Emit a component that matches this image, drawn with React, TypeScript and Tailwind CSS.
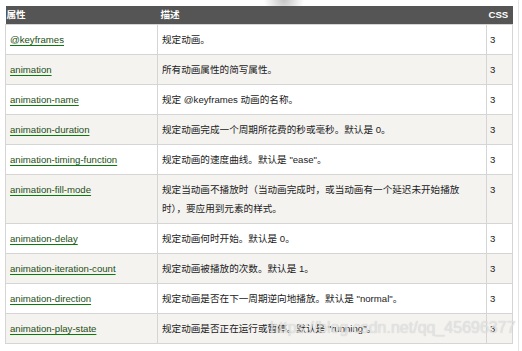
import type { ReactNode } from "react";

type Row = { name: string; desc: ReactNode; css: string };

const rows: Row[] = [
  { name: "@keyframes", desc: "规定动画。", css: "3" },
  { name: "animation", desc: "所有动画属性的简写属性。", css: "3" },
  { name: "animation-name", desc: "规定 @keyframes 动画的名称。", css: "3" },
  { name: "animation-duration", desc: "规定动画完成一个周期所花费的秒或毫秒。默认是 0。", css: "3" },
  { name: "animation-timing-function", desc: "规定动画的速度曲线。默认是 \"ease\"。", css: "3" },
  {
    name: "animation-fill-mode",
    desc: "规定当动画不播放时（当动画完成时，或当动画有一个延迟未开始播放时），要应用到元素的样式。",
    css: "3",
  },
  { name: "animation-delay", desc: "规定动画何时开始。默认是 0。", css: "3" },
  { name: "animation-iteration-count", desc: "规定动画被播放的次数。默认是 1。", css: "3" },
  { name: "animation-direction", desc: "规定动画是否在下一周期逆向地播放。默认是 \"normal\"。", css: "3" },
  { name: "animation-play-state", desc: "规定动画是否正在运行或暂停。默认是 \"running\"。", css: "3" },
];

export default function App() {
  return (
    <div
      className="relative h-[351px] w-[522px] overflow-hidden bg-white"
      style={{ fontFamily: '"Liberation Sans", "Noto Sans CJK SC", sans-serif' }}
    >
      {/* faint blurred blob above the table */}
      <div className="absolute left-[262px] top-[-18px] h-[36px] w-[44px] rounded-full bg-[radial-gradient(circle,_rgba(150,150,150,0.55)_0%,_rgba(200,200,200,0)_70%)]" />

      <div className="h-full w-[519px] border-r border-[#e4e4e4] pl-[5px] pt-[6px]">
        <table className="relative w-[507px] table-fixed border-collapse text-[9.6px] text-[#222]">
          <colgroup>
            <col className="w-[152px]" />
            <col className="w-[329px]" />
            <col className="w-[26px]" />
          </colgroup>
          <thead>
            <tr className="h-[18px] bg-[#555555] text-left font-bold text-white">
              <th className="pl-[1px] align-middle font-bold">属性</th>
              <th className="pl-[3px] align-middle font-bold">描述</th>
              <th className="pl-[2px] align-middle font-bold">CSS</th>
            </tr>
          </thead>
          <tbody>
            {rows.map((r, i) => (
              <tr key={r.name} className={i % 2 === 0 ? "bg-white" : "bg-[#f4f3f0]"}>
                <td className="border border-[#d5d5d5] px-[4px] py-[5px] align-top leading-[19px]">
                  <a className="text-[#1d4f14] underline decoration-[#0a7a0a] underline-offset-[2px]">{r.name}</a>
                </td>
                <td className="border border-[#d5d5d5] py-[5px] pl-[4px] pr-[14px] align-top leading-[19px]">
                  {r.desc}
                </td>
                <td className="border border-[#d5d5d5] px-[3px] py-[5px] align-top leading-[19px]">{r.css}</td>
              </tr>
            ))}
          </tbody>
        </table>
      </div>

      {/* watermark */}
      <div
        className="pointer-events-none absolute left-[270px] top-[318px] text-[16px] leading-[20px] text-[rgba(232,232,232,0.8)]"
        style={{ textShadow: "0 0 1px rgba(150,150,150,0.45)" }}
      >
        https://blog.csdn.net/qq_45696377
      </div>
    </div>
  );
}
